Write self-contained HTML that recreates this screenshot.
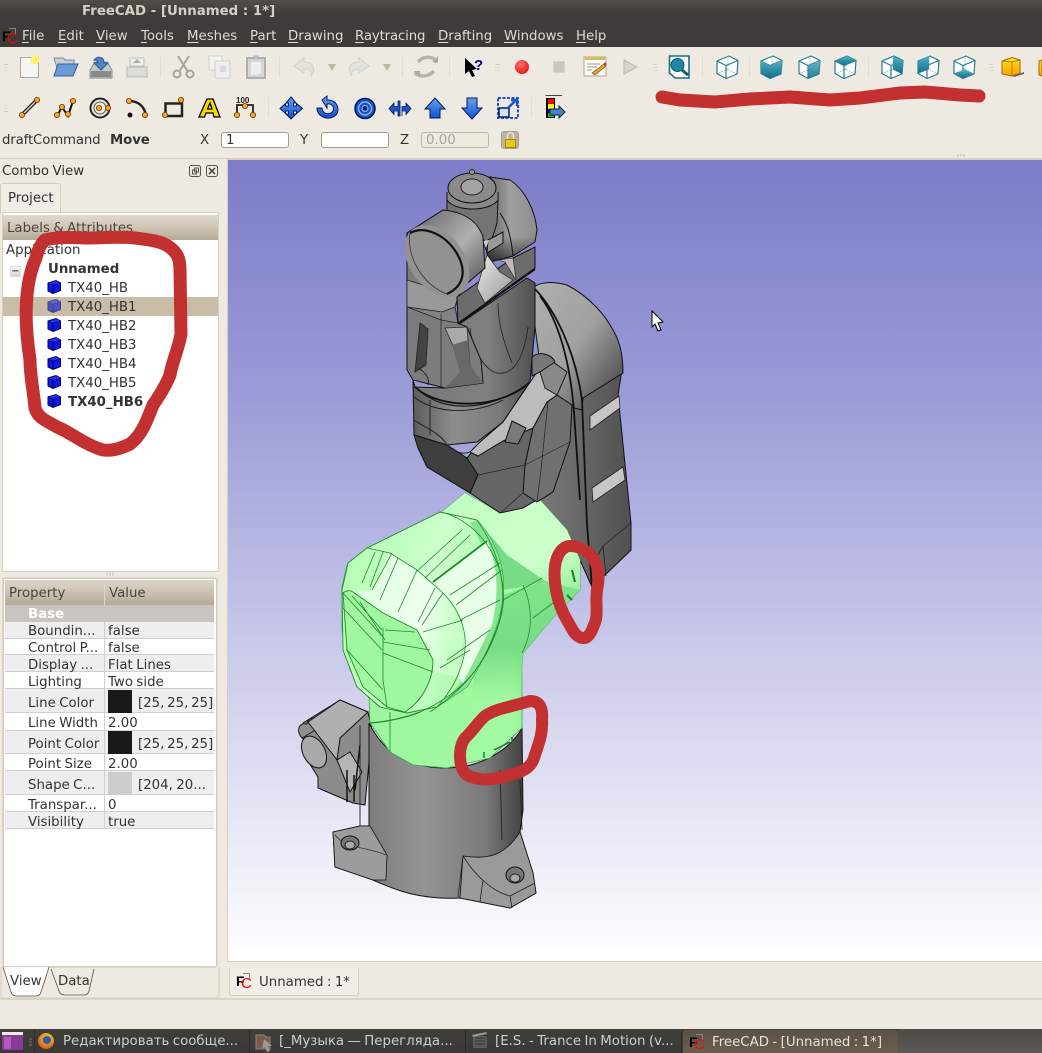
<!DOCTYPE html>
<html><head><meta charset="utf-8">
<style>
html,body{margin:0;padding:0;width:1042px;height:1053px;overflow:hidden;background:#eeeae2}
body{position:relative;font:13.33px/16px "DejaVu Sans","Liberation Sans",sans-serif;color:#3c3b37;word-spacing:-.8px}
.t{position:absolute;white-space:nowrap;line-height:16px;margin-top:2px}
.b{position:absolute;box-sizing:border-box}
.m{color:#dfdbd2;top:27px}
u{text-underline-offset:2px}
.k{color:#333}
svg{position:absolute;left:0;top:0}
.fc{position:absolute;font:bold 14px/14px "Liberation Sans",sans-serif;color:#000;width:14px;height:16px}
.fc i{position:absolute;left:5px;top:2px;color:#f00;font:normal 15px/15px "Liberation Sans",sans-serif}
.fc b{position:absolute;left:7px;top:-1px;width:6px;height:6px;border:1px solid #888;border-left:0;border-bottom:0}
</style></head><body>

<!-- title + menu -->
<div class="b" style="left:0;top:0;width:1042px;height:47px;background:linear-gradient(#4f4e49 0,#3e3d39 14px,#3c3b37 100%)"></div>
<div class="t" style="left:82px;top:2px;font-weight:bold;color:#d4d0c6;word-spacing:0">FreeCAD - [Unnamed : 1*]</div>
<div class="t m" style="left:22px"><u>F</u>ile</div>
<div class="t m" style="left:58px"><u>E</u>dit</div>
<div class="t m" style="left:96px"><u>V</u>iew</div>
<div class="t m" style="left:141px"><u>T</u>ools</div>
<div class="t m" style="left:187px"><u>M</u>eshes</div>
<div class="t m" style="left:250px"><u>P</u>art</div>
<div class="t m" style="left:288px"><u>D</u>rawing</div>
<div class="t m" style="left:355px;letter-spacing:-.15px"><u>R</u>aytracing</div>
<div class="t m" style="left:438px"><u>D</u>rafting</div>
<div class="t m" style="left:504px"><u>W</u>indows</div>
<div class="t m" style="left:576px"><u>H</u>elp</div>
<div class="fc" style="left:2px;top:29px"><b></b>F<i>C</i></div>

<!-- draft bar -->
<div class="t k" style="left:2px;top:131px;letter-spacing:-.15px">draftCommand</div>
<div class="t k" style="left:110px;top:131px;font-weight:bold;letter-spacing:-.1px">Move</div>
<div class="t k" style="left:200px;top:131px">X</div>
<div class="t k" style="left:300px;top:131px">Y</div>
<div class="t k" style="left:400px;top:131px">Z</div>
<div class="b" style="left:221px;top:132px;width:68px;height:16px;background:#fff;border:1px solid #a59d8c;border-radius:3px"></div>
<div class="t k" style="left:226px;top:131px">1</div>
<div class="b" style="left:321px;top:132px;width:68px;height:16px;background:#fff;border:1px solid #a59d8c;border-radius:3px"></div>
<div class="b" style="left:421px;top:132px;width:68px;height:16px;background:#eeeae2;border:1px solid #bdb6a6;border-radius:3px"></div>
<div class="t" style="left:426px;top:131px;color:#a8a59e">0.00</div>
<div class="b" style="left:501px;top:131px;width:18px;height:18px;background:#bdb3a0;border:1px solid #a59d8c;border-radius:3px"></div>
<div class="b" style="left:0;top:158px;width:1042px;height:1px;background:#d9d2c4"></div>

<!-- combo view -->
<div class="t k" style="left:2px;top:162px">Combo View</div>
<div class="b" style="left:0;top:183px;width:61px;height:30px;background:#f0ede6;border:1px solid #d5cebf;border-bottom:0;border-radius:3px 3px 0 0"></div>
<div class="t k" style="left:8px;top:189px">Project</div>
<div class="b" style="left:2px;top:212px;width:217px;height:360px;background:#fff;border:1px solid #d5cebf;border-radius:2px"></div>
<div class="b" style="left:3px;top:215px;width:215px;height:25px;background:linear-gradient(#e0d9cc,#d2c9b9 40%,#b4aa99)"></div>
<div class="t" style="left:7px;top:219px;color:#4a463e">Labels &amp; Attributes</div>
<div class="t" style="left:6px;top:241px;color:#333">Application</div>
<div class="b" style="left:3px;top:297px;width:215px;height:19px;background:#c9bda8"></div>
<div class="b" style="left:10px;top:266px;width:11px;height:11px;background:linear-gradient(#fff,#d9d3c8);border:1px solid #ddd;font:10px/9px 'DejaVu Sans',sans-serif;text-align:center;color:#000">−</div>
<div class="t" style="left:48px;top:260px;font-weight:bold;color:#333">Unnamed</div>
<div class="t" style="left:68px;top:279px;color:#333">TX40_HB</div>
<div class="t" style="left:68px;top:298px;color:#333">TX40_HB1</div>
<div class="t" style="left:68px;top:317px;color:#333">TX40_HB2</div>
<div class="t" style="left:68px;top:336px;color:#333">TX40_HB3</div>
<div class="t" style="left:68px;top:355px;color:#333">TX40_HB4</div>
<div class="t" style="left:68px;top:374px;color:#333">TX40_HB5</div>
<div class="t" style="left:68px;top:393px;font-weight:bold;color:#333">TX40_HB6</div>

<!-- property -->
<div class="b" style="left:3px;top:578px;width:214px;height:389px;background:#fff;border:1px solid #d5cebf;outline:1px solid #ddd6c8;border-radius:2px"></div>
<div class="b" style="left:5px;top:580px;width:209px;height:25px;background:linear-gradient(#dcd5c8,#cfc6b5 40%,#b4aa99)"></div>
<div class="b" style="left:104px;top:580px;width:1px;height:25px;background:#ddd6c8"></div>
<div class="t" style="left:9px;top:584px;color:#4a463e">Property</div>
<div class="t" style="left:109px;top:584px;color:#4a463e">Value</div>
<div class="b" style="left:5px;top:605px;width:209px;height:17px;background:#c9c5be"></div>
<div class="t" style="left:28px;top:605px;color:#fff;font-weight:bold">Base</div>
<div class="b" style="left:5px;top:622px;width:209px;height:17px;background:#eee;border-bottom:1px solid #d0d0d0"></div>
<div class="b" style="left:5px;top:639px;width:209px;height:16px;background:#fff;border-bottom:1px solid #d0d0d0"></div>
<div class="b" style="left:5px;top:655px;width:209px;height:17px;background:#eee;border-bottom:1px solid #d0d0d0"></div>
<div class="b" style="left:5px;top:672px;width:209px;height:17px;background:#fff;border-bottom:1px solid #d0d0d0"></div>
<div class="b" style="left:5px;top:689px;width:209px;height:24px;background:#eee;border-bottom:1px solid #d0d0d0"></div>
<div class="b" style="left:5px;top:713px;width:209px;height:18px;background:#fff;border-bottom:1px solid #d0d0d0"></div>
<div class="b" style="left:5px;top:731px;width:209px;height:23px;background:#eee;border-bottom:1px solid #d0d0d0"></div>
<div class="b" style="left:5px;top:754px;width:209px;height:17px;background:#fff;border-bottom:1px solid #d0d0d0"></div>
<div class="b" style="left:5px;top:771px;width:209px;height:24px;background:#eee;border-bottom:1px solid #d0d0d0"></div>
<div class="b" style="left:5px;top:795px;width:209px;height:17px;background:#fff;border-bottom:1px solid #d0d0d0"></div>
<div class="b" style="left:5px;top:812px;width:209px;height:17px;background:#eee;border-bottom:1px solid #d0d0d0"></div>
<div class="b" style="left:104px;top:622px;width:1px;height:207px;background:#d0d0d0"></div>
<div class="b" style="left:108px;top:690px;width:24px;height:23px;background:#191919"></div>
<div class="b" style="left:108px;top:731px;width:24px;height:23px;background:#191919"></div>
<div class="b" style="left:108px;top:772px;width:24px;height:23px;background:#ccc"></div>
<div class="t k" style="left:28px;top:622px">Boundin...</div><div class="t k" style="left:108px;top:622px">false</div>
<div class="t k" style="left:28px;top:639px">Control P...</div><div class="t k" style="left:108px;top:639px">false</div>
<div class="t k" style="left:28px;top:656px">Display ...</div><div class="t k" style="left:108px;top:656px">Flat Lines</div>
<div class="t k" style="left:28px;top:673px">Lighting</div><div class="t k" style="left:108px;top:673px">Two side</div>
<div class="t k" style="left:28px;top:694px">Line Color</div><div class="t k" style="left:138px;top:694px;word-spacing:-1.5px">[25, 25, 25]</div>
<div class="t k" style="left:28px;top:714px">Line Width</div><div class="t k" style="left:108px;top:714px">2.00</div>
<div class="t k" style="left:28px;top:735px">Point Color</div><div class="t k" style="left:138px;top:735px;word-spacing:-1.5px">[25, 25, 25]</div>
<div class="t k" style="left:28px;top:755px">Point Size</div><div class="t k" style="left:108px;top:755px">2.00</div>
<div class="t k" style="left:28px;top:776px">Shape C...</div><div class="t k" style="left:138px;top:776px">[204, 20...</div>
<div class="t k" style="left:28px;top:796px">Transpar...</div><div class="t k" style="left:108px;top:796px">0</div>
<div class="t k" style="left:28px;top:813px">Visibility</div><div class="t k" style="left:108px;top:813px">true</div>

<!-- bottom areas -->
<div class="b" style="left:0;top:998px;width:1042px;height:2px;background:#ddd5c6"></div>
<div class="b" style="left:229px;top:968px;width:130px;height:28px;background:#f1eee7;border:1px solid #d5cebf;border-top:0;border-radius:0 0 3px 3px"></div>
<div class="fc" style="left:236px;top:974px"><b></b>F<i>C</i></div>
<div class="t k" style="left:259px;top:973px">Unnamed : 1*</div>

<!-- taskbar -->
<div class="b" style="left:0;top:1029px;width:1042px;height:24px;background:linear-gradient(#3f3e3a,#3a3935)"></div>
<div class="b" style="left:683px;top:1030px;width:215px;height:23px;background:linear-gradient(#5a5248,#685d4f);border-radius:3px 3px 0 0"></div>
<div class="b" style="left:898px;top:1029px;width:144px;height:24px;background:linear-gradient(#4c4b46,#5a5953)"></div>
<div class="t" style="left:63px;top:1032px;color:#c6d0d0">Редактировать сообще...</div>
<div class="t" style="left:279px;top:1032px;color:#c6d0d0">[_Музыка — Перегляда...</div>
<div class="t" style="left:495px;top:1032px;color:#c6d0d0">[E.S. - Trance In Motion (v...</div>
<div class="t" style="left:712px;top:1033px;color:#e8e2d8">FreeCAD - [Unnamed : 1*]</div>
<div class="fc" style="left:689px;top:1035px"><b></b>F<i>C</i></div>

<svg width="1042" height="1053" viewBox="0 0 1042 1053" xmlns="http://www.w3.org/2000/svg">
<defs>
<linearGradient id="vp" x1="0" y1="0" x2="0" y2="1"><stop offset="0" stop-color="#7c7cc8"/><stop offset=".3" stop-color="#9c9cd8"/><stop offset=".6" stop-color="#c8c8ea"/><stop offset="1" stop-color="#ffffff"/></linearGradient>
<linearGradient id="cyl" x1="0" y1="0" x2="1" y2="0"><stop offset="0" stop-color="#6e6e6e"/><stop offset=".45" stop-color="#949494"/><stop offset=".75" stop-color="#7a7a7a"/><stop offset="1" stop-color="#2e2e2e"/></linearGradient>
<linearGradient id="body" x1="0" y1="0" x2="1" y2="0"><stop offset="0" stop-color="#5c5c5c"/><stop offset=".35" stop-color="#8d8d8d"/><stop offset=".75" stop-color="#7a7a7a"/><stop offset="1" stop-color="#4a4a4a"/></linearGradient>
<linearGradient id="ctr" x1="0" y1="0" x2="1" y2="0"><stop offset="0" stop-color="#787878"/><stop offset=".6" stop-color="#808080"/><stop offset="1" stop-color="#505050"/></linearGradient>
<linearGradient id="cylL" x1="0" y1="0" x2="1" y2="1"><stop offset="0" stop-color="#5e5e5e"/><stop offset=".55" stop-color="#b0b0b0"/><stop offset=".85" stop-color="#6a6a6a"/><stop offset="1" stop-color="#3a3a3a"/></linearGradient>
<linearGradient id="rd" x1="0" y1="0" x2="1" y2="0"><stop offset="0" stop-color="#4a4a4a"/><stop offset=".55" stop-color="#a0a0a0"/><stop offset="1" stop-color="#8c8c8c"/></linearGradient>
<linearGradient id="rd2" x1="0" y1="0" x2="0" y2="1"><stop offset="0" stop-color="#fff" stop-opacity="0"/><stop offset=".7" stop-color="#000" stop-opacity="0"/><stop offset="1" stop-color="#000" stop-opacity=".6"/></linearGradient>
<linearGradient id="arm" x1="0" y1="0" x2="1" y2="1"><stop offset="0" stop-color="#b0b0b0"/><stop offset=".5" stop-color="#a0a0a0"/><stop offset="1" stop-color="#3a3a3a"/></linearGradient>
<linearGradient id="arm2" x1="0" y1="0" x2="1" y2="0"><stop offset="0" stop-color="#7a7a7a"/><stop offset="1" stop-color="#505050"/></linearGradient>
<linearGradient id="wl" x1="0" y1="0" x2="1" y2="1"><stop offset="0" stop-color="#e8e8e8"/><stop offset="1" stop-color="#999"/></linearGradient>
<linearGradient id="gr" x1="0" y1="0" x2="1" y2=".35"><stop offset="0" stop-color="#b0ffb0"/><stop offset=".6" stop-color="#ccffcc"/><stop offset="1" stop-color="#a8f8a8"/></linearGradient>
<linearGradient id="gr2" x1="0" y1="0" x2="1" y2="0"><stop offset="0" stop-color="#9cf59c"/><stop offset=".72" stop-color="#a2fba2"/><stop offset="1" stop-color="#5cc070"/></linearGradient>
<linearGradient id="gr3" x1="0" y1="0" x2="1" y2=".3"><stop offset="0" stop-color="#dcffdc"/><stop offset=".7" stop-color="#eeffee"/><stop offset="1" stop-color="#c8ffc8"/></linearGradient>
<linearGradient id="grE" x1="0" y1="0" x2="0" y2="1"><stop offset="0" stop-color="#80e48a"/><stop offset=".55" stop-color="#78dc86" stop-opacity="1"/><stop offset="1" stop-color="#78dc86" stop-opacity="0"/></linearGradient>
<linearGradient id="grU" x1="0" y1="0" x2="1" y2="1"><stop offset="0" stop-color="#c0ffc0"/><stop offset=".7" stop-color="#ccffcc"/><stop offset="1" stop-color="#9cf09c"/></linearGradient>
<linearGradient id="tc" x1="0" y1="0" x2="0" y2="1"><stop offset="0" stop-color="#55aec6"/><stop offset="1" stop-color="#0f6f8a"/></linearGradient>
<linearGradient id="yc" x1="0" y1="0" x2="0" y2="1"><stop offset="0" stop-color="#ffdf20"/><stop offset="1" stop-color="#ffa000"/></linearGradient>
<linearGradient id="bl" x1="0" y1="0" x2="0" y2="1"><stop offset="0" stop-color="#6aa2ea"/><stop offset="1" stop-color="#0f50d0"/></linearGradient>
<radialGradient id="red" cx=".4" cy=".3" r=".8"><stop offset="0" stop-color="#ff7070"/><stop offset="1" stop-color="#dd0f0f"/></radialGradient>
<radialGradient id="ff" cx=".6" cy=".3" r=".8"><stop offset="0" stop-color="#ffd030"/><stop offset="1" stop-color="#c8501a"/></radialGradient>
<g id="dot"><circle r="2.6" fill="#ffa51c" stroke="#5a3a00" stroke-width=".8"/></g>
<g id="cb"><path d="M-6-4 L2-6.5 L6.5-4 L6.5 3.5 L-1 6.5 L-6 4Z" fill="#0c16e6" stroke="#00004a"/><path d="M-6-4 L-1-2 L6.5-4.5 M-1-2 V6" fill="none" stroke="#00004a"/><path d="M-5.500-3.800 L2-6 L6-4 L-1-2.200Z" fill="#2830f0"/></g>
<g id="wire" fill="none" stroke="#2a7d90" stroke-width="1.2"><path d="M-10-6 L2-11 L11-6.500 L10 7 L-1 11.500 L-10 6.500Z" fill="#fff"/><path d="M-10-6 L-1-1.500 L11-6.500 M-1-1.500 V11.500"/><path d="M-10 6.500 L1 2.500 L10 7 M1 2.500 V-11" stroke-width=".5" stroke-dasharray="1.500 1"/></g>
</defs>

<!-- viewport -->
<rect x="227.500" y="159.500" width="815" height="802" fill="url(#vp)" stroke="#d5cebf"/>

<!-- BASE -->
<path d="M340,700 L368,712 L372,730 L365,805 L353,803 L318,788 L318,777 L303,753 L303,723Z" fill="#8c8c8c" stroke="#111" stroke-width="1"/>
<path d="M307,724 C298,722 296,732 302,738 L322,726 C318,716 308,716 307,724Z" fill="#8f8f8f" stroke="#222"/>
<ellipse cx="314" cy="752" rx="11" ry="17" transform="rotate(-28 314 752)" fill="#a9a9a9" stroke="#111"/>
<path d="M308,722 L340,700 L368,712 L340,738 L337,760 Z" fill="#b0b0b0" stroke="#111"/>
<path d="M337,760 L350,752 L362,772 L350,792Z" fill="#b5b5b5" stroke="#111"/>
<path d="M347,770 V802 M354,775 V802 M360,745 L355,790" stroke="#111" fill="none" stroke-width="1.500"/>
<path d="M369,723 C385,755 410,768 447,768 C480,768 510,750 522,728 L523,810 L520,832 L533,873 L536,893 L510,908 L460,898 C420,900 395,890 373,880 L335,867 L333,832 L360,826 L369,826Z" fill="url(#cyl)" stroke="#111" stroke-width="1"/>
<path d="M333,832 L360,826 L370,826 L387,855 L386,880 L373,880 L335,867Z" fill="#9c9c9c" stroke="#111" stroke-width=".8"/>
<path d="M335,835 C345,848 370,848 386,855" fill="none" stroke="#333" stroke-width=".8"/>
<path d="M463,856 C490,860 505,855 520,832 L533,873 L536,893 L510,908 L460,898Z" fill="#9a9a9a" stroke="#111" stroke-width=".8"/>
<path d="M463,856 C478,880 495,892 510,896 L512,908 M510,896 L535,883 M483,880 L480,902 M463,856 L458,897" fill="none" stroke="#222" stroke-width=".8"/>
<path d="M500,770 L502,840 M520,780 L522,830 M360,725 V826" fill="none" stroke="#222" stroke-width=".9"/>
<ellipse cx="350" cy="843" rx="9" ry="7" fill="#777" stroke="#111"/><ellipse cx="350" cy="845" rx="5" ry="4" fill="#aaa" stroke="#222"/>
<ellipse cx="515" cy="875" rx="9" ry="8" fill="#777" stroke="#111"/><ellipse cx="515" cy="878" rx="5" ry="4" fill="#aaa" stroke="#222"/>

<!-- BACK ARM -->
<path d="M582,398 L622,370 L618,395 L631,523 L631,550 L603,577 L592,587 L580,560 L540,500 L560,400Z" fill="url(#arm2)" stroke="#111" stroke-width="1"/>
<path d="M530,290 C540,280 555,282 567,285 C590,297 605,315 613,330 C620,342 623,355 623,373 L583,398 L582,410 L545,400Z" fill="url(#arm)" stroke="#111" stroke-width="1"/>
<path d="M535,289 C555,310 575,350 582,400 L587,525 L592,587 M540,296 C558,320 570,360 574,412 L580,500" fill="none" stroke="#111" stroke-width="1.800"/>
<path d="M590,416 L619,396 L620,408 L590,430Z M592,488 L623,467 L625,480 L593,502Z" fill="#c6c6c6" stroke="#222" stroke-width=".8"/>
<path d="M631,523 L603,546 L598,555 M603,546 L606,576" fill="none" stroke="#222" stroke-width=".8"/>

<!-- GREEN -->
<path d="M465,493 L442,512 L367,548 L347,565 L342,587 L342,630 L350,670 L369,698 L370,723 L390,752 L413,765 L447,768 L490,758 L522,728 L522,667 L523,653 L557,613 L580,590 L580,560 L567,530 L540,500 L500,513Z" fill="url(#gr2)" stroke="#3fa84a" stroke-width=".8"/>
<path d="M465,493 L442,512 L477,520 L507,555 L545,581 L580,590 L580,560 L567,530 L540,500 L500,513Z" fill="url(#grU)"/>
<path d="M490,535 L507,555 L545,581 L530,585 L503,590Z" fill="#78dc86"/>
<path d="M503,595 L545,581 L580,590 L557,613 L523,653 L522,700 L470,700 L480,650Z" fill="url(#grE)"/>
<path d="M367,548 L440,512 L477,520 C495,540 505,565 503,590 C503,615 490,650 467,687 L437,707 L407,713 L380,707 L357,687 L343,650 L342,590 L348,563Z" fill="url(#gr)" stroke="#1f8c28" stroke-width=".9"/>
<path d="M477,520 C495,540 505,565 503,590 C503,615 490,650 467,687 L437,707 C460,690 478,655 485,630 C495,590 490,555 470,523Z" fill="#86e490"/>
<path d="M390,553 L417,570 L443,593 L465,630 L457,677 L433,672 L433,660 C430,640 410,622 383,613 L353,592 L372,590Z" fill="url(#gr3)"/>
<path d="M433,580 L487,540 C497,565 500,590 492,625 L463,683 L457,677 C466,650 472,620 443,593Z" fill="#e6ffe6"/>
<path d="M343,593 C347,590 350,590 353,592 L383,613 L417,630 L433,660 C433,680 423,700 405,712 L387,707 L363,687 L347,650Z" fill="#9ff79f" stroke="#1f8c28" stroke-width=".9"/>
<g fill="none" stroke="#1f8c28" stroke-width=".8">
<path d="M367,548 L390,553 L417,570 L443,593 C460,610 470,635 463,660 C458,680 448,695 437,707"/>
<path d="M440,512 C480,520 515,570 500,620 C490,655 470,690 420,712"/>
<path d="M477,520 C498,550 510,590 498,625 C486,660 470,685 430,712"/>
<path d="M523,585 C532,605 534,630 522,653 M503,600 L542,578 M533,618 L557,600"/>
<path d="M392,553 L372,590 M398,558 L380,600 M417,570 L398,612 M443,593 L422,625 M435,588 L418,622"/>
<path d="M375,552 L362,583 M383,552 L370,587 M416,572 L462,530 M425,578 L470,535 M450,595 L500,563 M456,605 L502,570 M460,620 L500,600"/>
<path d="M423,632 L463,620 M440,668 L470,650 M447,660 L490,630"/>
<path d="M343,593 L383,637 M352,596 L382,630 M360,602 L385,640 M343,608 L382,650 M383,628 V680 L387,707 M383,653 L433,672 M383,642 L430,650 M385,630 L415,632 M347,650 L383,690 M390,712 V752"/>
<path d="M370,723 C385,722 405,718 420,712" stroke-width="1.300"/>
</g>
<path d="M433,582 L487,541" stroke="#1f8c28" stroke-width="1.800" fill="none"/>
<path d="M572,570 L575,582 M567,595 L572,600" stroke="#1f7c28" stroke-width="2" fill="none"/>
<path d="M484,752 V758 M494,750 L510,742 M512,737 V745" stroke="#1f7c28" stroke-width="1.500" fill="none"/>

<!-- UPPER BODY -->
<!-- lower waist -->
<path d="M413,380 L414,435 L447,445 L477,442 L503,422 L530,382 C500,405 450,420 415,387Z" fill="url(#body)" stroke="#111"/>
<path d="M414,435 L418,448 L427,467 L470,493 L478,475 L467,458 L447,445Z" fill="#3e3e3e" stroke="#111"/>
<!-- forearm box -->
<path d="M467,458 L478,475 L470,493 L500,513 L523,508 L540,498 L525,465 L533,428 L503,422 L480,442Z" fill="#666" stroke="#111"/>
<path d="M547,402 L557,395 L572,405 L570,442 L553,492 L537,502 L523,493 L525,465 L533,428Z" fill="#707070" stroke="#111"/>
<path d="M525,465 L570,442 M537,502 L541,470 L548,402 M478,475 L525,465 M500,513 L523,493" fill="none" stroke="#222" stroke-width=".7"/>
<path d="M470,452 L480,442 L503,422 L537,372 L553,362 L567,372 L557,395 L547,402 L533,428 L503,441 L478,456Z" fill="#bcbcbc" stroke="#111"/>
<path d="M512,421 L505,442 L518,444 L526,428Z" fill="#7a7a7a" stroke="#111"/>
<path d="M540,372 L553,362 L567,372 L557,395 L545,388Z" fill="#8a8a8a" stroke="#222"/>
<path d="M532,357 C540,350 552,355 555,362 L540,372 L532,376Z" fill="#777" stroke="#111"/>
<path d="M447,445 C440,432 420,425 414,420 M447,445 C455,452 462,455 470,452" stroke="#222" fill="none"/>
<path d="M430,400 V435 M414,397 C440,417 480,412 503,400" stroke="#111" fill="none" stroke-width=".8"/>
<!-- center torso -->
<path d="M458,325 L527,278 L535,283 L535,327 L530,382 C500,405 450,420 415,387 L445,388 L483,383 L467,327Z" fill="url(#ctr)" stroke="#111"/>
<path d="M498,303 C498,325 505,345 512,363 M470,328 C472,350 485,370 497,373 C510,375 523,365 528,327" fill="none" stroke="#222" stroke-width=".8"/>
<path d="M415,387 C440,410 500,410 530,382" fill="none" stroke="#111" stroke-width="1.800"/>
<!-- left block -->
<path d="M407,233 L407,370 L413,380 L445,388 L483,383 L481,360 L467,327 L458,323 L455,307 L463,287 L443,210Z" fill="#7c7c7c" stroke="#111"/>
<path d="M407,280 L433,288 L447,295 L460,290 L455,307 L442,312 L407,307Z" fill="#999" stroke="#222" stroke-width=".8"/>
<path d="M407,307 L442,312 L455,307 L458,323 L441,320Z" fill="#828282" stroke="#222" stroke-width=".7"/>
<path d="M441,314 V388" stroke="#222" stroke-width=".7"/>
<path d="M445,328 L467,327 L470,365 L455,350Z" fill="#aaa" stroke="#222" stroke-width=".7"/>
<path d="M452,345 L468,340 L470,365 L483,383 L445,388 L460,372Z" fill="#686868"/>
<path d="M420,323 L428,329 L426,365 L415,372Z" fill="#444" stroke="#222" stroke-width=".8"/>
<path d="M418,368 C425,372 430,378 428,385" fill="none" stroke="#222"/>
<!-- right disc -->
<path d="M490,177 L510,180 C525,190 535,210 537,230 L535,242 L513,256 L490,262 L478,225 L495,200Z" fill="url(#rd)" stroke="#111"/>
<path d="M490,177 L510,180 C525,190 535,210 537,230 L535,242 L513,256 L490,262 L478,225 L495,200Z" fill="url(#rd2)"/>
<path d="M500,213 C506,222 510,230 513,255" fill="none" stroke="#111"/>
<!-- collar band -->
<path d="M457,297 L513,258 L535,247 L535,268 L458,323Z" fill="#6c6c6c" stroke="#111"/>
<path d="M458,324 L535,269" stroke="#111" stroke-width="2"/>
<!-- wrist -->
<path d="M447,200 H498 L497,223 L490,245 L480,237 L447,213Z" fill="#747474" stroke="#111"/>
<path d="M488,240 L503,232 L503,243 L487,253Z" fill="#9a9a9a" stroke="#111"/>
<path d="M483,241 L489,240 L486,248Z" fill="#d0d0d0"/>
<!-- white wedge -->
<path d="M487,255 L500,272 L513,280 L485,303 L477,288Z" fill="url(#wl)" stroke="#222" stroke-width=".7"/>
<path d="M498,260 L513,258 L516,280 L505,262Z" fill="#bbb" stroke="#222" stroke-width=".6"/>
<!-- left drum -->
<path d="M407,233 L443,210 C465,212 478,222 483,237 L485,268 L463,287 L445,295 L420,280Z" fill="url(#cylL)" stroke="#111"/>
<ellipse cx="437" cy="261" rx="27" ry="40" transform="rotate(-37 437 261)" fill="#929292" stroke="none"/>
<path d="M410,233 C425,225 445,235 456,252 C466,268 466,285 447,294" fill="none" stroke="#111" stroke-width="2.200"/>
<path d="M410,233 C406,255 422,285 447,294" fill="none" stroke="#333" stroke-width=".8"/>
<!-- flange -->
<path d="M447,192 V200 C455,212 490,212 498,200 V192" fill="#888" stroke="#111"/>
<ellipse cx="472" cy="188" rx="24" ry="15" fill="#8a8a8a" stroke="#111"/>
<ellipse cx="472" cy="187" rx="11" ry="8" fill="#a4a4a4" stroke="#222"/>
<circle cx="472" cy="172" r="2.500" fill="#999" stroke="#222"/>

<!-- cursor -->
<path d="M652,311 V327 L655,324 L658,331 L661,330 L658,323 L663,322Z" fill="#fff" stroke="#000" stroke-width="1"/>

<!-- red scribbles -->
<g fill="none" stroke="#c23030" stroke-linejoin="round" stroke-linecap="round">
<path stroke-width="13" d="M45,240 C60,236 75,238 90,238 C105,238 118,236 135,238 C150,240 160,241 168,246 C177,252 180,258 180,270 L181,333 C180,345 172,362 170,375 C166,385 160,395 153,405 C147,420 142,435 130,444 C118,450 110,451 103,450 C85,445 70,432 57,427 C45,420 38,418 35,408 C34,395 30,375 30,360 C27,340 25,315 27,295 C29,275 33,265 36,258 C38,250 40,245 45,240Z"/>
<path stroke-width="12" d="M570,546 C580,546 592,552 597,566 C599,575 599,580 597,590 C595,605 599,615 594,625 C591,633 588,639 582,638 C574,636 572,628 568,622 C562,612 558,602 556,590 C554,578 554,566 557,558 C560,550 565,546 570,546Z"/>
<path stroke-width="12" d="M530,701 C540,701 543,708 542,720 C543,735 538,745 534,758 C530,770 520,772 507,776 C495,779 485,781 475,778 C465,776 463,772 461,765 C459,755 460,745 465,738 C472,732 478,722 485,716 C495,709 510,707 530,701Z"/>
<path stroke-width="13" d="M662,97 L680,100 L715,102 L750,99 L790,97 L830,100 L860,98 L900,93 L925,92 L960,95 L979,96"/>
</g>

<!-- tree cubes -->
<use href="#cb" x="54" y="287"/><g opacity=".65"><use href="#cb" x="54" y="306"/></g><use href="#cb" x="54" y="325"/><use href="#cb" x="54" y="344"/><use href="#cb" x="54" y="363"/><use href="#cb" x="54" y="382"/><use href="#cb" x="54" y="401"/>

<!-- grips -->
<g stroke="#dcd6c8" stroke-width="1">
<path d="M4,64.500 H8 M4,67.500 H8 M4,70.500 H8 M4,105.500 H8 M4,108.500 H8 M4,111.500 H8 M495,64.500 H500 M495,67.500 H500 M495,70.500 H500 M653,64.500 H658 M653,67.500 H658 M653,70.500 H658 M989,64.500 H994 M989,67.500 H994 M989,70.500 H994"/>
</g>
<path d="M160.500,57 V77 M279.500,57 V77 M402.500,57 V77 M449.500,57 V77 M702.500,57 V77 M749.500,57 V77 M868.500,57 V77 M268.500,97 V118 M531.500,97 V118" stroke="#e2ddd1"/>

<!-- row 1 icons -->
<path d="M20.500,57.500 H38.500 V77.500 H20.500Z" fill="#f5f5f3" stroke="#a8a8a4"/><circle cx="35" cy="60" r="4.500" fill="#fff27a"/><circle cx="35" cy="60" r="2.500" fill="#fff14a"/>
<path d="M54,58 H63 L65,60 H74 V74 H59Z" fill="#c9cfd6" stroke="#7e8a94"/><path d="M58,64 H78 L73,76 H54Z" fill="#6a9ad6" stroke="#34609c"/>
<path d="M90,70 L95,62 H107 L112,70 V78 H90Z" fill="#c5c8c4" stroke="#8a8c88"/><rect x="91" y="71" width="20" height="6" fill="#888a85"/><path d="M94,60 C97,56 104,56 104,63 H108 L101,70 L94,63 H98 C98,61 96,60 94,60Z" fill="#4f86c8" stroke="#2a5a9c"/>
<path d="M130,58 H144 V66 H130Z" fill="#eeeeec" stroke="#c0c0bc"/><path d="M127,67 H147 V77 H127Z" fill="#dcdcd8" stroke="#b8b8b4"/><path d="M137,59 L133,63 H141Z" fill="#aaa"/>
<g fill="none" stroke="#a3a3a0" stroke-width="2"><path d="M178,56 L188,72 M189,56 L179,72"/><circle cx="177" cy="74" r="3.500"/><circle cx="190" cy="74" r="3.500"/></g>
<path d="M209,56 H222 V70 H209Z" fill="#f3f3f0" stroke="#d0d0cc"/><path d="M215,61 H230 V78 H215Z" fill="#eee" stroke="#cfcfca"/><path d="M220,66 H226 V72 H220Z" fill="#d9d9d6"/>
<path d="M247,58 H265 V78 H247Z" fill="#d6d6d3" stroke="#9d9d9a" stroke-width="1.500"/><rect x="253" y="55.500" width="6" height="4" fill="#bbb"/><path d="M251,62 H261 V73 L256,75 H251Z" fill="#eee"/>
<path d="M304,58 L294,66 L304,73 V69 C310,69 312,72 311,76 C316,70 314,62 304,62Z" fill="#e2e2de" stroke="#d0d0cc"/>
<path d="M328,64 H336 L332,71Z" fill="#c0b89c"/>
<path d="M359,58 L369,66 L359,73 V69 C353,69 351,72 352,76 C347,70 349,62 359,62Z" fill="#e2e2de" stroke="#d0d0cc"/>
<path d="M383,64 H391 L387,71Z" fill="#c0b89c"/>
<path d="M418,62 C424,55 432,57 436,60 V63 M434,71 C428,78 420,76 416,74 V71" fill="none" stroke="#b4b4b0" stroke-width="3.500"/><path d="M432,62 H438 V56Z M414,71 H420 V78Z" fill="#aaa"/>
<path d="M465,58 V74 L469,71 L472,77 L475,76 L472,70 L477,69Z" fill="#000"/><text x="474" y="70" font-family="Liberation Sans,sans-serif" font-size="15" font-weight="bold" fill="#00008c">?</text>
<circle cx="522" cy="67" r="7" fill="url(#red)"/>
<rect x="553.500" y="61.500" width="11" height="11" fill="#c9c7c2" stroke="#d6d4cf"/>
<path d="M584,57 H606 V76 H584Z" fill="#fbfaf4" stroke="#a8a8a0"/><rect x="585" y="57" width="20" height="3" fill="#d8c050"/><path d="M587,64 H600 M587,67 H597 M587,70 H592" stroke="#999"/><path d="M592,73 L604,64 L606,66 L595,75Z" fill="#e8a030" stroke="#6a4a10" stroke-width=".6"/><circle cx="605" cy="64" r="1.500" fill="#e03030"/>
<path d="M624,60 L637,67 L624,74Z" fill="#d6d3cb" stroke="#bdbab2"/>
<path d="M669.500,56 H689 V78 H675 L669.500,73Z" fill="#fff" stroke="#1f6c80" stroke-width="1.600"/><circle cx="677.500" cy="65" r="6.500" fill="#1f86a5" stroke="#0e5c72"/><path d="M682,70 L688,75" stroke="#0e5c72" stroke-width="3"/>

<use href="#wire" x="727" y="67"/>
<use href="#wire" x="771" y="67"/><path d="M761,61 L770,65.500 V78.500 L761,73.500Z M770,65.500 L782,60.500 L781,74 L770,78.500Z" fill="url(#tc)"/>
<use href="#wire" x="809" y="67"/><path d="M808,65.500 L820,60.500 L819,74 L808,78.500Z" fill="url(#tc)" opacity=".9"/>
<use href="#wire" x="845" y="67"/><path d="M835,61 L847,56 L856,60.500 L844,65.500Z" fill="url(#tc)"/>
<use href="#wire" x="892" y="67"/><path d="M893,56 L903,60.500 L902,74 L893,69.500Z" fill="url(#tc)"/>
<use href="#wire" x="928" y="67"/><path d="M918,61 L929,56 V69 L918,73.500Z" fill="url(#tc)"/>
<use href="#wire" x="964" y="67"/><path d="M954,73.500 L965,69.500 L974,74 L963,78.500Z" fill="url(#tc)"/>
<path d="M1002,61 L1012,57.500 L1020,60 V73 L1012,76 L1002,74Z" fill="url(#yc)" stroke="#a06800"/><path d="M1012,62 L1020,60 M1012,62 L1002,61 M1012,62 V76" stroke="#a06800" fill="none" stroke-width=".7"/><path d="M1013,76 L1024,72 V74 L1014,77Z" fill="#666"/>
<path d="M1039,61 L1042,60 V76 L1039,75Z" fill="url(#yc)" stroke="#a06800"/>

<!-- row 2 icons -->
<path d="M22,115 L36,101" stroke="#222" stroke-width="4"/><path d="M22,115 L36,101" stroke="#ccc" stroke-width="1.500"/><use href="#dot" x="22" y="115"/><use href="#dot" x="37" y="100"/>
<path d="M57,116 L62,107 L68,116 L73,101" fill="none" stroke="#111" stroke-width="2"/><use href="#dot" x="57" y="115"/><use href="#dot" x="62" y="107"/><use href="#dot" x="68" y="114"/><use href="#dot" x="73" y="101"/>
<circle cx="100" cy="108" r="9.500" fill="none" stroke="#222" stroke-width="2"/><circle cx="100" cy="108" r="6" fill="none" stroke="#555" stroke-width="1"/><use href="#dot" x="99" y="108"/><use href="#dot" x="108" y="108"/>
<path d="M129,101 C138,101 144,106 146,115" fill="none" stroke="#222" stroke-width="2.500"/><use href="#dot" x="129" y="101"/><use href="#dot" x="145" y="115"/><circle cx="130" cy="115" r="2.500" fill="#111"/>
<path d="M165.500,103.500 H182 V116 H165.500Z" fill="none" stroke="#222" stroke-width="2.500"/><use href="#dot" x="165" y="115"/><use href="#dot" x="181" y="100"/>
<path d="M199,117 L207,99 H213 L220,117 H214 L213,113 H206 L204.500,117Z M207.500,109 H212 L210,103Z" fill="#ffd800" stroke="#000" stroke-width="1.300" fill-rule="evenodd"/>
<path d="M237,117 V105 H253 V117" fill="none" stroke="#222" stroke-width="1.800"/><use href="#dot" x="237" y="115"/><use href="#dot" x="253" y="115"/><use href="#dot" x="245" y="106"/><text x="236" y="103" font-family="Liberation Sans,sans-serif" font-size="8" font-weight="bold" fill="#222">100</text>
<path d="M291,97 L296,103 H293.500 V106 H296.500 V103.500 L302.500,108.500 L296.500,113.500 V111 H293.500 V114 H296 L291,119 L286,114 H288.500 V111 H285.500 V113.500 L280,108.500 L285.500,103.500 V106 H288.500 V103 H286Z" fill="url(#bl)" stroke="#001a60" stroke-width="1"/>
<path d="M322,100 L327,96 V100 C338,99 342,113 333,117 C326,120 317,116 317,108 H322 C322,112 326,115 331,113 C336,109 333,103 327,104 V108Z" fill="url(#bl)" stroke="#001a60"/>
<circle cx="365" cy="108.500" r="10" fill="#1a54c8" stroke="#001a60" stroke-width="1.500"/><circle cx="365" cy="108.500" r="6.500" fill="none" stroke="#9cbcee" stroke-width="1.300"/><circle cx="365" cy="108.500" r="3" fill="#0d2e88" stroke="#9cbcee"/>
<path d="M389,108.500 L394,103 V106.500 H398 V101 H400 V116 H398 V111 H394 V114.500Z M411,108.500 L406,103 V106.500 H402 V116 H402 V111 H406 V114.500Z" fill="#1a54c8" stroke="#001a60" stroke-width=".8"/>
<path d="M435,98 L445,109 H440 V118 H430 V109 H425Z" fill="url(#bl)" stroke="#001a60"/>
<path d="M467,98 H477 V108 H482 L472,119 L462,108 H467Z" fill="url(#bl)" stroke="#001a60"/>
<rect x="498" y="98" width="20" height="20" fill="none" stroke="#1f50c8" stroke-width="2" stroke-dasharray="3 1.500"/><rect x="499" y="108" width="10" height="9" fill="#cfe0f8" stroke="#001a60" stroke-width="1.500"/><path d="M508,108 L515,101 M511,100 H517 V106" stroke="#1a54c8" stroke-width="2.500" fill="none"/>
<rect x="546" y="98" width="9" height="20" fill="#000"/><rect x="548" y="99" width="6" height="5" fill="#f00"/><rect x="548" y="104" width="6" height="5" fill="#ff0"/><rect x="548" y="109" width="6" height="3" fill="#00f"/><rect x="548" y="113" width="6" height="4" fill="#0d0"/><path d="M550,109 H559 V106 L565,112 L559,118 V115 H550Z" fill="#4a7fd8" stroke="#123"/>
<path d="M545.500,95.500 H562" stroke="#444"/>

<!-- lock, combo buttons -->
<rect x="505.500" y="139.500" width="10" height="8" fill="#e8c820" stroke="#a08800"/><path d="M507.500,139 V136 C507.500,131.500 513.500,131.500 513.500,136 V139" fill="none" stroke="#e8e4da" stroke-width="1.600"/>
<rect x="189.500" y="165.500" width="11" height="11" rx="2" fill="#eeeae2" stroke="#555"/><rect x="192.500" y="170" width="4" height="4" fill="none" stroke="#555"/><rect x="194.500" y="168" width="4" height="4" fill="none" stroke="#555"/>
<rect x="206.500" y="165.500" width="11" height="11" rx="2" fill="#eeeae2" stroke="#555"/><path d="M209,168 L215,174 M215,168 L209,174" stroke="#444" stroke-width="1.500"/>
<path d="M107,572 V576 M110,572 V576 M113,572 V576 M958,154 V157 M961,154 V157 M964,154 V157" stroke="#c8c2b4"/>

<!-- bottom tabs -->
<path d="M3,967 L11,992 Q12,996 17,996 H36 Q40,996 41,992 L49,967" fill="#fff" stroke="#555" stroke-width=".8"/>
<path d="M51,969 L59,991 Q60,995 65,995 H84 Q88,995 89,991 L94,969" fill="none" stroke="#555" stroke-width=".8"/>
<path d="M1,967 V996 Q1,998 4,998 H217 Q219,998 219,996 V967" fill="none" stroke="#d5cebf"/>

<!-- taskbar icons -->
<rect x="2" y="1033" width="21" height="17" fill="#8a3a98"/><rect x="2" y="1032" width="21" height="3" fill="#eeeae2"/><rect x="4" y="1037" width="7" height="12" fill="#b35abf"/>
<path d="M29,1039 H32 M29,1042 H32 M29,1045 H32" stroke="#777"/>
<path d="M34.500,1030 V1053 M249.500,1030 V1053 M465.500,1030 V1053 M681.500,1030 V1053" stroke="#2e2d2a"/>
<circle cx="46" cy="1041" r="8" fill="url(#ff)"/><circle cx="47" cy="1040" r="4" fill="#2a5ca8"/><path d="M41,1035 C48,1033 53,1038 53,1042 L50,1036Z" fill="#f0a020"/>
<path d="M256,1035 H264 L266,1037 H270 V1049 H256Z" fill="#7a5a48" stroke="#8a8578"/><path d="M264,1039 L272,1046 H268 L270,1051 L267,1052 L265,1047 L262,1049Z" fill="#9a9a90"/>
<rect x="473" y="1036" width="14" height="12" fill="#5a5a58"/><path d="M472,1035 L486,1032 L487,1034 L473,1037Z" fill="#999"/><path d="M475,1038 H485 M475,1041 H485 M475,1044 H485" stroke="#333"/>
</svg>
<div class="t k" style="left:10px;top:972px">View</div>
<div class="t k" style="left:58px;top:972px">Data</div>
</body></html>
